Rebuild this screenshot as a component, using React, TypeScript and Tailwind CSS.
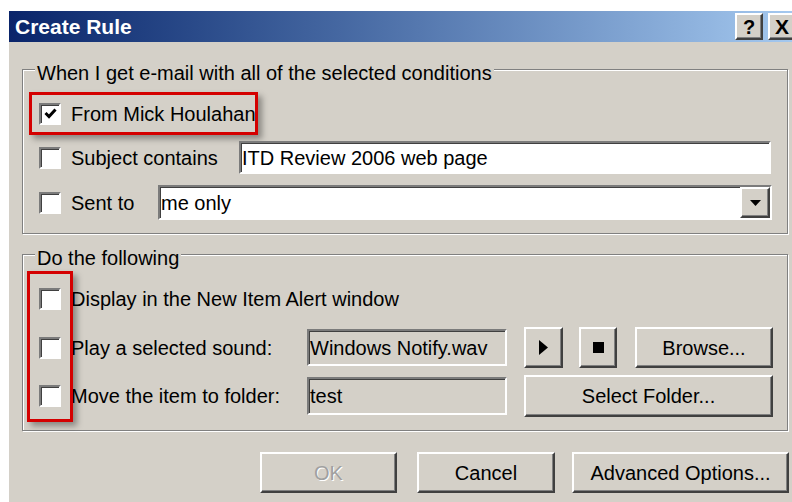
import React from 'react';

// Win2000-style bevels
const sunken =
  'border-2 border-t-[#7b7b7b] border-l-[#7b7b7b] border-b-white border-r-white shadow-[inset_1px_1px_0_#404040]';
const raised =
  'border-2 border-t-white border-l-white border-b-[#404040] border-r-[#404040] shadow-[inset_-1px_-1px_0_#808080]';

const CheckBox = ({ checked = false }: { checked?: boolean }) => (
  <div className={`w-[22px] h-[22px] bg-white shrink-0 flex items-center justify-center ${sunken}`}>
    {checked && (
      <svg width="13" height="11" viewBox="0 0 13 11">
        <path d="M1.5 5 L5 8.5 L11.5 1.5" stroke="#000" strokeWidth="3" fill="none" />
      </svg>
    )}
  </div>
);

const Button = ({ className = '', children }: any) => (
  <div className={`bg-[#d4d0c8] flex items-center justify-center shrink-0 ${raised} ${className}`}>
    {children}
  </div>
);

const GroupBox = ({ title, className = '', children }: any) => (
  <div className={`relative border border-[#808080] shadow-[1px_1px_0_#fff,inset_1px_1px_0_#fff] ${className}`}>
    <span className="absolute -top-[9px] left-[12px] px-[2px] bg-[#d4d0c8] leading-[24px]">{title}</span>
    {children}
  </div>
);

const App = () => {
  return (
    <div className="w-[792px] h-[502px] bg-white overflow-hidden pt-[11px] pl-[9px] font-['Liberation_Sans',Arial,sans-serif] text-[20px] text-black">
      <div className="w-[791px] h-[491px] bg-[#d4d0c8] flex flex-col">
        {/* Title bar */}
        <div className="h-[31px] shrink-0 flex items-center pl-[6px] pr-[4px] bg-linear-to-r from-[#0a246a] to-[#a6caf0]">
          <span className="text-white font-bold text-[21px] leading-none">Create Rule</span>
          <div className="ml-auto flex gap-[5px]">
            <Button className="w-[28px] h-[27px] font-bold text-[20px] leading-none">?</Button>
            <Button className="w-[28px] h-[27px] font-bold text-[21px] leading-none">X</Button>
          </div>
        </div>

        {/* Conditions */}
        <GroupBox
          title="When I get e-mail with all of the selected conditions"
          className="ml-[13px] mt-[27px] w-[766px] h-[165px] shrink-0"
        >
          <div className="ml-[6px] mt-[22px] w-[229px] h-[43px] border-[3px] border-[#d40000] shadow-[4px_4px_6px_rgba(0,0,0,0.35)] flex items-center pl-[7px]">
            <CheckBox checked />
            <span className="ml-[10px] whitespace-nowrap">From Mick Houlahan</span>
          </div>
          <div className="mt-[6px] h-[33px] flex items-center pl-[16px]">
            <CheckBox />
            <span className="ml-[10px] w-[168px] whitespace-nowrap">Subject contains</span>
            <div className={`w-[532px] h-[33px] bg-white flex items-center pl-[1px] ${sunken}`}>
              ITD Review 2006 web page
            </div>
          </div>
          <div className="mt-[11px] h-[35px] flex items-center pl-[16px]">
            <CheckBox />
            <span className="ml-[10px] w-[87px] whitespace-nowrap">Sent to</span>
            <div className={`w-[614px] h-[35px] bg-white flex items-center pl-[1px] ${sunken}`}>
              <span className="flex-1">me only</span>
              <Button className="w-[30px] h-full">
                <svg width="11" height="6" viewBox="0 0 11 6">
                  <path d="M0 0 H11 L5.5 6 Z" fill="#000" />
                </svg>
              </Button>
            </div>
          </div>
        </GroupBox>

        {/* Actions */}
        <GroupBox title="Do the following" className="ml-[13px] mt-[20px] w-[766px] h-[177px] shrink-0">
          <div className="absolute left-[4px] top-[16px] w-[46px] h-[151px] border-[3px] border-[#d40000] shadow-[4px_4px_6px_rgba(0,0,0,0.35)]" />
          <div className="mt-[29px] h-[30px] flex items-center pl-[16px]">
            <CheckBox />
            <span className="ml-[10px] whitespace-nowrap">Display in the New Item Alert window</span>
          </div>
          <div className="mt-[13px] h-[41px] flex items-center pl-[16px]">
            <CheckBox />
            <span className="ml-[10px] w-[236px] whitespace-nowrap">Play a selected sound:</span>
            <div className={`w-[200px] h-[37px] flex items-center pl-[1px] ${sunken}`}>Windows Notify.wav</div>
            <Button className="ml-[17px] w-[39px] h-[41px]">
              <svg width="9" height="15" viewBox="0 0 9 15">
                <path d="M0 0 L9 7.5 L0 15 Z" fill="#000" />
              </svg>
            </Button>
            <Button className="ml-[16px] w-[38px] h-[41px]">
              <div className="w-[11px] h-[11px] bg-black" />
            </Button>
            <Button className="ml-[18px] w-[138px] h-[41px]">Browse...</Button>
          </div>
          <div className="mt-[7px] h-[42px] flex items-center pl-[16px]">
            <CheckBox />
            <span className="ml-[10px] w-[236px] whitespace-nowrap">Move the item to folder:</span>
            <div className={`w-[200px] h-[38px] flex items-center pl-[1px] ${sunken}`}>test</div>
            <Button className="ml-[17px] w-[249px] h-[42px]">Select Folder...</Button>
          </div>
        </GroupBox>

        {/* Dialog buttons */}
        <div className="mt-[21px] ml-[251px] flex">
          <Button className="w-[137px] h-[41px] text-[#a0a0a0] [text-shadow:1px_1px_0_#fff]">OK</Button>
          <Button className="ml-[20px] w-[138px] h-[41px]">Cancel</Button>
          <Button className="ml-[17px] w-[217px] h-[41px]">Advanced Options...</Button>
        </div>
      </div>
    </div>
  );
};

export default App;
